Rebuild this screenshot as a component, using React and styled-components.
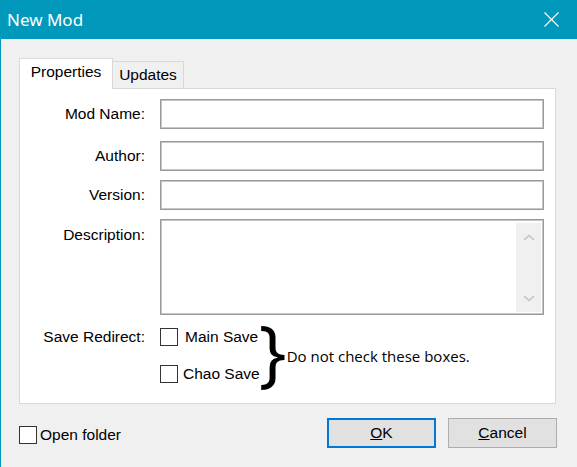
import React from "react";
import styled, { createGlobalStyle } from "styled-components";

const GlobalStyle = createGlobalStyle`
  html, body { margin: 0; padding: 0; background: #f0f0f0; }
  body { width: 577px; height: 467px; overflow: hidden; }
`;

const Window = styled.div`
  width: 577px;
  height: 467px;
  box-sizing: border-box;
  border-left: 1px solid #0099bc;
  background: #f0f0f0;
  display: flex;
  flex-direction: column;
  font-family: "Liberation Sans", Arial, sans-serif;
  font-size: 15.5px;
  color: #000;
`;

const TitleBar = styled.div`
  height: 39px;
  flex: none;
  background: #0099bc;
  margin-left: -1px;
  display: flex;
  align-items: center;
  justify-content: space-between;
  padding: 0 18px 0 7px;
`;

const Title = styled.span`
  font-family: "Noto Sans", "Open Sans", sans-serif;
  font-size: 17px;
  color: #fff;
  line-height: 20px;
  padding-top: 1px;
`;

const CloseIcon = styled.svg`
  width: 15px;
  height: 15px;
  display: block;
`;

const Body = styled.div`
  flex: 1;
  display: flex;
  flex-direction: column;
  padding: 19px 20px 0 18px;
`;

const TabStrip = styled.div`
  display: flex;
  align-items: flex-end;
  height: 30px;
  position: relative;
  z-index: 1;
`;

const Tab = styled.div`
  box-sizing: border-box;
  width: ${(p) => p.$w}px;
  height: ${(p) => (p.$active ? 31 : 27)}px;
  margin-bottom: ${(p) => (p.$active ? -1 : 0)}px;
  background: ${(p) => (p.$active ? "#fff" : "#f0f0f0")};
  border: 1px solid #d9d9d9;
  border-bottom: none;
  ${(p) => (p.$active ? "" : "border-left: none;")}
  text-align: center;
  line-height: 18px;
  padding-top: 4px;
`;

const Panel = styled.div`
  box-sizing: border-box;
  width: 537px;
  height: 316px;
  background: #fff;
  border: 1px solid #d9d9d9;
  display: flex;
  flex-direction: column;
`;

const Row = styled.div`
  display: grid;
  grid-template-columns: 125px 384px;
  column-gap: 15px;
  align-items: ${(p) => p.$align || "center"};
  margin-top: ${(p) => p.$top}px;
`;

const Label = styled.div`
  text-align: right;
  line-height: 18px;
  padding-top: ${(p) => p.$pt || 0}px;
`;

const TextBox = styled.div`
  box-sizing: border-box;
  height: ${(p) => p.$h}px;
  background: #fff;
  border: 1px solid #9a9a9a;
  box-shadow: inset 0 0 0 1px #c6c6c6;
  display: flex;
  justify-content: flex-end;
  padding: 3px 2px 2px 2px;
`;

const ScrollBar = styled.div`
  width: 25px;
  background: #f0f0f0;
  display: flex;
  flex-direction: column;
  justify-content: space-between;
  align-items: center;
  padding: 11px 0 10px;
`;

const Chevron = styled.svg`
  width: 12px;
  height: 7px;
  display: block;
`;

const Group = styled.div`
  display: flex;
  align-items: center;
`;

const CheckCol = styled.div`
  display: flex;
  flex-direction: column;
  gap: 19px;
`;

const CheckItem = styled.label`
  display: flex;
  align-items: center;
  gap: ${(p) => p.$gap || 6}px;
  line-height: 18px;
  margin-top: ${(p) => p.$top || 0}px;
`;

const Box = styled.span`
  box-sizing: border-box;
  width: 18px;
  height: 18px;
  background: #fff;
  border: 1px solid #333;
  flex: none;
`;

const Brace = styled.div`
  font-family: "Open Sans", "Noto Sans", sans-serif;
  font-size: 74px;
  line-height: 55px;
  height: 55px;
  width: 20px;
  display: flex;
  align-items: center;
  justify-content: center;
  margin-left: 3px;
  padding-bottom: 6px;
  box-sizing: content-box;
  margin-top: -6px;
  color: #000;
`;

const Note = styled.span`
  font-family: "Open Sans", "Noto Sans", sans-serif;
  font-size: 15px;
  margin-left: 4px;
  line-height: 20px;
`;

const BottomBar = styled.div`
  display: flex;
  align-items: center;
  justify-content: space-between;
  margin-top: 14px;
  height: 30px;
`;

const Buttons = styled.div`
  display: flex;
  gap: 12px;
`;

const Button = styled.button`
  box-sizing: border-box;
  width: 109px;
  height: 30px;
  background: #e1e1e1;
  border: ${(p) => (p.$primary ? "2px solid #0078d7" : "1px solid #adadad")};
  font-family: "Liberation Sans", Arial, sans-serif;
  font-size: 15.5px;
  color: #000;
  padding: 0;
  line-height: 18px;
`;

function ChevronIcon({ up }) {
  return (
    <Chevron viewBox="0 0 12 7">
      <polyline
        points={up ? "1,6 6,1.5 11,6" : "1,1 6,5.5 11,1"}
        fill="none"
        stroke="#c2c2c2"
        strokeWidth="1.6"
      />
    </Chevron>
  );
}

function Check({ children, gap, top }) {
  return (
    <CheckItem $gap={gap} $top={top}>
      <Box />
      <span>{children}</span>
    </CheckItem>
  );
}

export default function App() {
  return (
    <>
      <GlobalStyle />
      <Window>
        <TitleBar>
          <Title>New Mod</Title>
          <CloseIcon viewBox="0 0 15 15">
            <path d="M0.5 0.5 L14.5 14.5 M14.5 0.5 L0.5 14.5" stroke="#fff" strokeWidth="1.1" />
          </CloseIcon>
        </TitleBar>
        <Body>
          <TabStrip>
            <Tab $active $w={94}>Properties</Tab>
            <Tab $w={71}>Updates</Tab>
          </TabStrip>
          <Panel>
            <Row $top={10}>
              <Label>Mod Name:</Label>
              <TextBox $h={30} />
            </Row>
            <Row $top={12}>
              <Label>Author:</Label>
              <TextBox $h={30} />
            </Row>
            <Row $top={9}>
              <Label>Version:</Label>
              <TextBox $h={30} />
            </Row>
            <Row $top={9} $align="start">
              <Label $pt={7}>Description:</Label>
              <TextBox $h={96}>
                <ScrollBar>
                  <ChevronIcon up />
                  <ChevronIcon />
                </ScrollBar>
              </TextBox>
            </Row>
            <Row $top={13} $align="start">
              <Label>Save Redirect:</Label>
              <Group>
                <CheckCol>
                  <Check gap={7}>Main Save</Check>
                  <Check gap={5}>Chao Save</Check>
                </CheckCol>
                <Brace>{"}"}</Brace>
                <Note>Do not check these boxes.</Note>
              </Group>
            </Row>
          </Panel>
          <BottomBar>
            <Check gap={3} top={4}>Open folder</Check>
            <Buttons>
              <Button $primary><u>O</u>K</Button>
              <Button><u>C</u>ancel</Button>
            </Buttons>
          </BottomBar>
        </Body>
      </Window>
    </>
  );
}
